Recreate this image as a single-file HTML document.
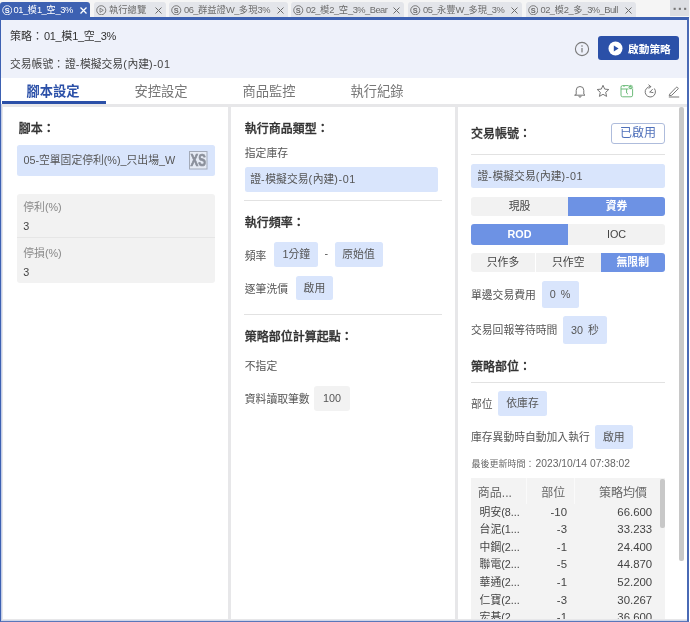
<!DOCTYPE html>
<html lang="zh-Hant">
<head>
<meta charset="utf-8">
<title>策略</title>
<style>
*{box-sizing:border-box;margin:0;padding:0}
html,body{width:690px;height:622px;overflow:hidden;background:#fff}
body{will-change:transform}
body{font-family:"Liberation Sans","Noto Sans CJK TC",sans-serif;color:#333;position:relative;font-size:12px}
.abs{position:absolute}
#tabbar{left:0;top:0;width:690px;height:18px;background:#f5f5f5}
.tab{position:absolute;top:2px;height:16px;background:#e3e5ea;color:#6c6c6c;font-size:9.3px;line-height:16.5px;white-space:nowrap;border-radius:3px 3px 0 0;padding-left:2.3px}
.tab.act{background:#3d61b2;color:#fff;padding-left:1.5px}
.tab.act svg{margin-right:1.6px}
.tab.act .x{right:3.3px;margin:0}
.tab.act .x path{stroke-width:1.3}
.tab i{font-style:normal;letter-spacing:-0.5px}
#hdr i{font-style:normal;letter-spacing:-0.35px}
#hdr b,.chip b{font-weight:normal;letter-spacing:0.6px}
.tab .x{position:absolute;right:3.8px;top:5px;margin:0}
.tab svg{vertical-align:-2px;margin-right:2.2px}
#frame{left:0;top:17px;width:689px;height:605px;border:2px solid #3d61b2;border-top-width:3px;border-left:1px solid #3d61b2;border-right:2px solid #4a6ab5;border-bottom:1px solid #5a77ba;background:#eef1fa}
#hdr{left:1px;top:20px;width:686px;height:58px;background:#eef1fa}
#nav{left:1px;top:78px;width:686px;height:27px;background:#fff}
#cbg{left:1px;top:104px;width:686px;height:517px;background:#e7e7e9;border-left:1px solid #c3cde8;border-bottom:1px solid #cfd6ea}
#content{left:0;top:0;width:690px;height:622px}
.panel{position:absolute;background:#fff;top:107px;height:512px}
.h{position:absolute;font-weight:500;-webkit-text-stroke:0.3px #333;font-size:12px;line-height:14px;color:#333;white-space:nowrap}
.t{position:absolute;font-size:10.8px;line-height:14px;color:#555;white-space:nowrap}
.chip{position:absolute;background:#d9e5fc;border-radius:2.5px;font-size:10.8px;color:#555;text-align:center;white-space:nowrap}
.gchip{position:absolute;background:#f2f2f2;border-radius:3px;font-size:10.8px;color:#555;text-align:center;white-space:nowrap}
.hr{position:absolute;height:1px;background:#e2e2e2}

.more{position:absolute;left:670px;top:0;width:19px;height:16px;background:#dcdee3}
#startbtn{position:absolute;left:597px;top:16px;width:81px;height:24px;background:#2b50a8;border-radius:3px;color:#fff;font-weight:bold;font-size:10.7px;line-height:25px}
#startbtn span{position:absolute;left:30px;top:0.5px}
.ntab{position:absolute;top:0.8px;width:108px;height:24px;line-height:25px;text-align:center;font-size:13.3px;color:#777;padding-right:6px}
.ntab.act{color:#2b50a8;font-weight:bold}
.uline{position:absolute;left:1px;top:23px;width:104px;height:3px;background:#2b50a8}
.xs{position:absolute;left:172.3px;top:6.3px;width:18.5px;height:18.5px}
.okbtn{position:absolute;border:1px solid #aebcdc;border-radius:3px;background:#fff;color:#4f70ba;font-size:12px;text-align:center}
.sg{position:absolute;font-size:10.8px;text-align:center;white-space:nowrap}
.sg.on{background:#6d92e4;color:#fff;font-weight:bold}
.sg.off{background:#f2f2f2;color:#444}
#tbl{position:absolute;left:471px;top:478px;width:194px;height:141px;background:#f3f3f3;overflow:hidden}
.th{position:absolute;font-size:12px;line-height:14px;color:#666;white-space:nowrap}
#rows{position:absolute;left:471px;top:478px;width:189px;height:141px;overflow:hidden}
.r{position:absolute;left:0;width:189px;height:14px;font-size:10.8px;line-height:14px;color:#444;white-space:nowrap}
.r span{position:absolute;top:0}
.c1{left:8.6px}
.c2{right:93px;font-size:11.4px}
.c3{right:7.8px;font-size:11.4px}
.vs{position:absolute;top:478px;width:1px;height:26px;background:#fafafa}
.isb{position:absolute;left:189px;top:0.5px;width:4.5px;height:49px;background:#c8c8c8;border-radius:2px}
.osb{position:absolute;left:679px;top:107px;width:5px;height:454px;background:#c8c8c8;border-radius:2px}
</style>
</head>
<body>
<div id="tabbar" class="abs">
<div class="tab act" style="left:0px;width:90px"><svg width="10.5" height="10.5" viewBox="0 0 12 12"><circle cx="6" cy="6" r="5.2" fill="none" stroke="currentColor" stroke-width="1"/><text x="6" y="9" font-size="8.5" font-weight="bold" text-anchor="middle" fill="currentColor" font-family="Liberation Sans, sans-serif">S</text></svg><span><i>01_</i>模<i>1_</i>空<i>_3%</i></span><svg class="x" width="7" height="7" viewBox="0 0 7 7"><path d="M0.5 0.5 L6.5 6.5 M6.5 0.5 L0.5 6.5" stroke="currentColor" stroke-width="1" fill="none"/></svg></div>
<div class="tab " style="left:94px;width:71.5px"><svg width="10.5" height="10.5" viewBox="0 0 12 12"><circle cx="6" cy="6" r="5.2" fill="none" stroke="currentColor" stroke-width="1"/><path d="M4.6 3.6 L8.4 6 L4.6 8.4 Z" fill="none" stroke="currentColor" stroke-width="0.9" stroke-linejoin="round"/></svg><span>執行總覽</span><svg class="x" width="7" height="7" viewBox="0 0 7 7"><path d="M0.5 0.5 L6.5 6.5 M6.5 0.5 L0.5 6.5" stroke="currentColor" stroke-width="1" fill="none"/></svg></div>
<div class="tab " style="left:169px;width:118.5px"><svg width="10.5" height="10.5" viewBox="0 0 12 12"><circle cx="6" cy="6" r="5.2" fill="none" stroke="currentColor" stroke-width="1"/><text x="6" y="9" font-size="8.5" font-weight="bold" text-anchor="middle" fill="currentColor" font-family="Liberation Sans, sans-serif">S</text></svg><span><i>06_</i>群益證<i>W_</i>多現<i>3%</i></span><svg class="x" width="7" height="7" viewBox="0 0 7 7"><path d="M0.5 0.5 L6.5 6.5 M6.5 0.5 L0.5 6.5" stroke="currentColor" stroke-width="1" fill="none"/></svg></div>
<div class="tab " style="left:291px;width:113px"><svg width="10.5" height="10.5" viewBox="0 0 12 12"><circle cx="6" cy="6" r="5.2" fill="none" stroke="currentColor" stroke-width="1"/><text x="6" y="9" font-size="8.5" font-weight="bold" text-anchor="middle" fill="currentColor" font-family="Liberation Sans, sans-serif">S</text></svg><span><i>02_</i>模<i>2_</i>空<i>_3%_Bear</i></span><svg class="x" width="7" height="7" viewBox="0 0 7 7"><path d="M0.5 0.5 L6.5 6.5 M6.5 0.5 L0.5 6.5" stroke="currentColor" stroke-width="1" fill="none"/></svg></div>
<div class="tab " style="left:408px;width:113.5px"><svg width="10.5" height="10.5" viewBox="0 0 12 12"><circle cx="6" cy="6" r="5.2" fill="none" stroke="currentColor" stroke-width="1"/><text x="6" y="9" font-size="8.5" font-weight="bold" text-anchor="middle" fill="currentColor" font-family="Liberation Sans, sans-serif">S</text></svg><span><i>05_</i>永豐<i>W_</i>多現<i>_3%</i></span><svg class="x" width="7" height="7" viewBox="0 0 7 7"><path d="M0.5 0.5 L6.5 6.5 M6.5 0.5 L0.5 6.5" stroke="currentColor" stroke-width="1" fill="none"/></svg></div>
<div class="tab " style="left:525.5px;width:110.5px"><svg width="10.5" height="10.5" viewBox="0 0 12 12"><circle cx="6" cy="6" r="5.2" fill="none" stroke="currentColor" stroke-width="1"/><text x="6" y="9" font-size="8.5" font-weight="bold" text-anchor="middle" fill="currentColor" font-family="Liberation Sans, sans-serif">S</text></svg><span><i>02_</i>模<i>2_</i>多<i>_3%_Bull</i></span><svg class="x" width="7" height="7" viewBox="0 0 7 7"><path d="M0.5 0.5 L6.5 6.5 M6.5 0.5 L0.5 6.5" stroke="currentColor" stroke-width="1" fill="none"/></svg></div>
<div class="more"><svg width="19" height="16" viewBox="0 0 19 16"><rect x="3.6" y="7.8" width="2.1" height="2.1" fill="#777"/><rect x="8.8" y="7.8" width="2.1" height="2.1" fill="#777"/><rect x="14.1" y="7.8" width="2.1" height="2.1" fill="#777"/></svg></div>
</div>
<div id="frame" class="abs"></div>
<div id="hdr" class="abs">
<div class="t" style="left:9px;top:8px;font-size:11px;line-height:14px;color:#333;top:8.5px">策略：<span style="display:inline-block;width:1px"></span><i>01_</i>模<i>1_</i>空<i>_3%</i></div>
<div class="t" style="left:9px;top:37px;font-size:10.8px;line-height:14px;color:#444">交易帳號：<span style="display:inline-block;width:1px"></span>證<b>-</b>模擬交易<b>(</b>內建<b>)-01</b></div>
<svg class="abs" style="left:573px;top:20.5px" width="16" height="16" viewBox="0 0 16 16"><circle cx="8" cy="8" r="6.6" fill="none" stroke="#7a7a7a" stroke-width="1.1"/><rect x="7.4" y="7" width="1.2" height="4.4" fill="#7a7a7a"/><circle cx="8" cy="5" r="0.8" fill="#7a7a7a"/></svg>
<div id="startbtn"><svg width="15" height="15" viewBox="0 0 15 15" style="position:absolute;left:10px;top:4.5px"><circle cx="7.5" cy="7.5" r="7" fill="#fff"/><path d="M5.8 4.4 L10.6 7.5 L5.8 10.6 Z" fill="#2b50a8"/></svg><span>啟動策略</span></div>
</div>
<div id="nav" class="abs">
<div class="ntab act" style="left:1px">腳本設定</div>
<div class="ntab" style="left:109px">安控設定</div>
<div class="ntab" style="left:217px">商品監控</div>
<div class="ntab" style="left:325px">執行紀錄</div>
<div class="uline"></div>
<svg class="abs" style="left:572px;top:6px" width="14" height="14" viewBox="0 0 14 14" fill="none" stroke="#777" stroke-width="1" stroke-linejoin="round" stroke-linecap="round"><path d="M3.2 10.2 V6.3 a3.8 3.8 0 0 1 7.6 0 V10.2 l1.2 1 H2 Z"/><path d="M5.9 12.2 a1.1 1.1 0 0 0 2.2 0"/></svg>
<svg class="abs" style="left:595px;top:6px" width="14" height="14" viewBox="0 0 14 14" fill="none" stroke="#777" stroke-width="1" stroke-linejoin="round"><path d="M7 1.3 L8.7 5.1 L12.8 5.5 L9.7 8.3 L10.6 12.4 L7 10.3 L3.4 12.4 L4.3 8.3 L1.2 5.5 L5.3 5.1 Z"/></svg>
<svg class="abs" style="left:618.5px;top:6px" width="14" height="14" viewBox="0 0 14 14" fill="none" stroke="#6dbb7a" stroke-width="1" stroke-linejoin="round"><rect x="1" y="1.6" width="11.6" height="11.2" rx="1.6"/><path d="M1 5 H8.5 M6.6 5 V9 L8 10.2 M4 1.6 V3"/><circle cx="10.6" cy="3.2" r="2.4" fill="#6dbb7a" stroke="#fff" stroke-width="0.6"/><path d="M9.6 3.2 L10.4 4 L11.7 2.5" stroke="#fff" stroke-width="0.7"/></svg>
<svg class="abs" style="left:642px;top:6px" width="14" height="14" viewBox="0 0 14 14" fill="none" stroke="#777" stroke-width="1" stroke-linecap="round" stroke-linejoin="round"><path d="M11.6 4.8 A5.2 5.2 0 1 1 7.6 2.6"/><path d="M5.8 0.9 L7.8 2.6 L6 4.4"/><path d="M7 8 L9.4 5.4 M7 8 L10 8.6"/></svg>
<svg class="abs" style="left:666px;top:6px" width="14" height="14" viewBox="0 0 14 14" fill="none" stroke="#777" stroke-width="1" stroke-linecap="round" stroke-linejoin="round"><path d="M3 9.8 L9.2 3.4 a0.9 0.9 0 0 1 1.3 0 l0.4 0.4 a0.9 0.9 0 0 1 0 1.3 L4.7 11.3 L2.6 11.7 Z"/><path d="M2.2 13 H11.8"/></svg>
</div>
<div id="cbg" class="abs"></div>
<div id="content" class="abs">
<div class="panel" style="left:3px;width:225px"></div>
<div class="panel" style="left:231px;width:224px"></div>
<div class="panel" style="left:458px;width:229px"></div>
<div class="h" style="left:18.7px;top:121.8px">腳本：</div>
<div class="chip" style="left:17px;top:145px;width:198.0px;height:31.0px;line-height:31.0px;text-align:left;padding-left:6.4px">05-空單固定停利(%)_只出場_W<svg class="xs" viewBox="0 0 18.5 18.5"><rect x="0.5" y="0.5" width="17.5" height="17.5" fill="#e6ebf5" stroke="#a3aab8" stroke-width="1"/><text x="1.5" y="15.2" style="font-family:Liberation Sans,sans-serif;font-weight:700;font-size:16.5px" fill="#8b909b" stroke="#8b909b" stroke-width="0.7" textLength="15.5" lengthAdjust="spacingAndGlyphs">XS</text></svg></div>
<div class="gchip" style="left:17px;top:194px;width:198px;height:89px"></div>
<div class="t" style="left:23.3px;top:199.7px;color:#888">停利(%)</div>
<div class="t" style="left:23.3px;top:219.2px;color:#444">3</div>
<div class="hr" style="left:17px;top:237px;width:198px;background:#e6e6e6"></div>
<div class="t" style="left:23.3px;top:246.0px;color:#888">停損(%)</div>
<div class="t" style="left:23.3px;top:265.1px;color:#444">3</div>
<div class="h" style="left:244.8px;top:121.9px">執行商品類型：</div>
<div class="t" style="left:244.8px;top:145.6px;">指定庫存</div>
<div class="chip" style="left:244.5px;top:167px;width:193.5px;height:24.5px;line-height:24.5px;text-align:left;padding-left:5.8px">證<b>-</b>模擬交易<b>(</b>內建<b>)-01</b></div>
<div class="hr" style="left:244px;top:200px;width:198px"></div>
<div class="h" style="left:244.8px;top:216.4px">執行頻率：</div>
<div class="t" style="left:244.8px;top:249.3px;">頻率</div>
<div class="chip" style="left:274.3px;top:242px;width:44.0px;height:25.0px;line-height:25.0px;">1分鐘</div>
<div class="t" style="left:324.5px;top:245.9px;">-</div>
<div class="chip" style="left:334.5px;top:242px;width:48.0px;height:25.0px;line-height:25.0px;">原始值</div>
<div class="t" style="left:244.8px;top:281.7px;">逐筆洗價</div>
<div class="chip" style="left:295.8px;top:275.6px;width:37.2px;height:24.4px;line-height:24.4px;">啟用</div>
<div class="hr" style="left:244px;top:314px;width:198px"></div>
<div class="h" style="left:244.8px;top:329.8px">策略部位計算起點：</div>
<div class="t" style="left:244.8px;top:358.9px;">不指定</div>
<div class="t" style="left:244.8px;top:391.8px;">資料讀取筆數</div>
<div class="gchip" style="left:314px;top:386px;width:36.0px;height:24.5px;line-height:24.5px;">100</div>
<div class="h" style="left:471px;top:126.8px">交易帳號：</div>
<div class="okbtn" style="left:611px;top:123px;width:54px;height:21px;line-height:18.5px">已啟用</div>
<div class="hr" style="left:471px;top:154px;width:194px"></div>
<div class="chip" style="left:471px;top:163.5px;width:194.0px;height:24.5px;line-height:24.5px;text-align:left;padding-left:6.5px">證<b>-</b>模擬交易<b>(</b>內建<b>)-01</b></div>
<div class="sg off" style="left:471px;top:196.7px;width:97.0px;height:19.3px;line-height:19.3px;border-radius:3px 0 0 3px;">現股</div>
<div class="sg on" style="left:568px;top:196.7px;width:97.0px;height:19.3px;line-height:19.3px;border-radius:0 3px 3px 0;">資券</div>
<div class="sg on" style="left:471px;top:224px;width:97.0px;height:20.6px;line-height:20.6px;border-radius:3px 0 0 3px;">ROD</div>
<div class="sg off" style="left:568px;top:224px;width:97.0px;height:20.6px;line-height:20.6px;border-radius:0 3px 3px 0;">IOC</div>
<div class="sg off" style="left:471px;top:252.6px;width:64.0px;height:19.4px;line-height:19.4px;border-radius:3px 0 0 3px;">只作多</div>
<div class="sg off" style="left:536px;top:252.6px;width:64.5px;height:19.4px;line-height:19.4px;">只作空</div>
<div class="sg on" style="left:600.5px;top:252.6px;width:64.5px;height:19.4px;line-height:19.4px;border-radius:0 3px 3px 0;">無限制</div>
<div class="t" style="left:471px;top:287.8px;">單邊交易費用</div>
<div class="chip" style="left:541.5px;top:280.6px;width:37.0px;height:27.4px;line-height:27.4px;word-spacing:2px">0 %</div>
<div class="t" style="left:471px;top:323.4px;">交易回報等待時間</div>
<div class="chip" style="left:563px;top:316px;width:44.0px;height:28.0px;line-height:28.0px;word-spacing:2px">30 秒</div>
<div class="h" style="left:471px;top:360.0px">策略部位：</div>
<div class="hr" style="left:471px;top:382px;width:194px"></div>
<div class="t" style="left:471px;top:397.2px;">部位</div>
<div class="chip" style="left:498px;top:391px;width:49.0px;height:24.6px;line-height:24.6px;">依庫存</div>
<div class="t" style="left:471px;top:430.0px;">庫存異動時自動加入執行</div>
<div class="chip" style="left:595px;top:425px;width:37.7px;height:24.0px;line-height:24.0px;">啟用</div>
<div class="t" style="left:471.5px;top:457.0px;font-size:9px;color:#666">最後更新時間：<span style="font-size:10.3px;margin-left:1px">2023/10/14 07:38:02</span></div>
<div id="tbl"><div class="isb"></div></div>
<div class="osb"></div>
<div class="vs" style="left:526px"></div><div class="vs" style="left:574px"></div>
<div class="th" style="left:477.8px;top:485.5px;">商品...</div>
<div class="th" style="left:541.2px;top:485.5px;">部位</div>
<div class="th" style="left:598.9px;top:485.5px;">策略均價</div>
<div id="rows">
<div class="r" style="top:26.8px"><span class="c1">明安(8...</span><span class="c2">-10</span><span class="c3">66.600</span></div>
<div class="r" style="top:44.3px"><span class="c1">台泥(1...</span><span class="c2">-3</span><span class="c3">33.233</span></div>
<div class="r" style="top:61.9px"><span class="c1">中鋼(2...</span><span class="c2">-1</span><span class="c3">24.400</span></div>
<div class="r" style="top:79.4px"><span class="c1">聯電(2...</span><span class="c2">-5</span><span class="c3">44.870</span></div>
<div class="r" style="top:97.0px"><span class="c1">華通(2...</span><span class="c2">-1</span><span class="c3">52.200</span></div>
<div class="r" style="top:114.5px"><span class="c1">仁寶(2...</span><span class="c2">-3</span><span class="c3">30.267</span></div>
<div class="r" style="top:132.1px"><span class="c1">宏碁(2...</span><span class="c2">-1</span><span class="c3">36.600</span></div>
</div>
</div>
</body>
</html>
